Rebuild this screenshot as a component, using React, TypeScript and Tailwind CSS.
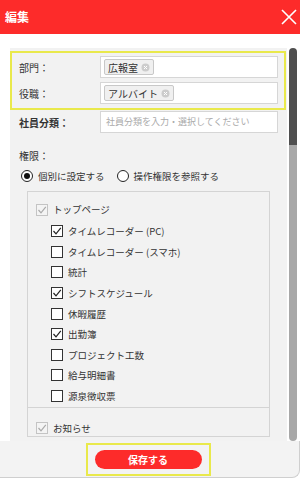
import React from 'react'

const font = { fontFamily: '"Noto Sans CJK JP", "Noto Sans", sans-serif' }

function Check({ checked, disabled }: { checked?: boolean; disabled?: boolean }) {
  return (
    <span
      className={`w-[12px] h-[12px] border flex items-center justify-center shrink-0 ${
        disabled ? 'border-[#c4c4c4] bg-[#f4f4f4]' : 'border-[#333] bg-white'
      }`}
    >
      {checked && (
        <svg width="10" height="10" viewBox="0 0 10 10">
          <path
            d="M1.5 5 L4 7.8 L8.8 1.8"
            fill="none"
            stroke={disabled ? '#aaa' : '#222'}
            strokeWidth="1.2"
          />
        </svg>
      )}
    </span>
  )
}

function Tag({ text }: { text: string }) {
  return (
    <span className="inline-flex items-center gap-[3px] h-[16px] px-[3px] border border-[#c8c8c8] bg-[#f0f0f0] text-[10px] text-[#333] rounded-[2px]">
      {text}
      <svg width="9" height="9" viewBox="0 0 9 9">
        <circle cx="4.5" cy="4.5" r="4" fill="#ccc" />
        <path d="M3 3 L6 6 M6 3 L3 6" stroke="#fff" strokeWidth="1" />
      </svg>
    </span>
  )
}

const items: [string, boolean][] = [
  ['タイムレコーダー (PC)', true],
  ['タイムレコーダー (スマホ)', false],
  ['統計', false],
  ['シフトスケジュール', true],
  ['休暇履歴', false],
  ['出勤簿', true],
  ['プロジェクト工数', false],
  ['給与明細書', false],
  ['源泉徴収票', false],
]

export default function App() {
  return (
    <div className="w-[300px] h-[478px] flex flex-col bg-white overflow-hidden text-[#333]" style={font}>
      {/* header */}
      <div className="h-[34px] shrink-0 bg-[#fd2b2a] flex items-center justify-between pl-[5px] pr-[2px]">
        <span className="text-white font-bold text-[12px]">編集</span>
        <svg width="18" height="18" viewBox="0 0 18 18">
          <path d="M2 2 L16 16 M16 2 L2 16" stroke="#fff" strokeWidth="1.6" />
        </svg>
      </div>

      {/* body */}
      <div className="flex-1 flex pt-[14px] pl-[10px] overflow-hidden">
        <div className="w-[277px] bg-[#f2f2f2] pt-[3px] overflow-hidden">
          <div className="border-[2px] border-[#e9e94b] w-[276px] pt-[3px] pb-[4px] flex flex-col gap-[4px]">
            <div className="flex items-center h-[22px]">
              <span className="w-[88px] pl-[7px] text-[10px]">部門：</span>
              <div className="w-[178px] h-[22px] bg-white border border-[#d6d6d6] flex items-center pl-[3px]">
                <Tag text="広報室" />
              </div>
            </div>
            <div className="flex items-center h-[22px]">
              <span className="w-[88px] pl-[7px] text-[10px]">役職：</span>
              <div className="w-[178px] h-[22px] bg-white border border-[#d6d6d6] flex items-center pl-[3px]">
                <Tag text="アルバイト" />
              </div>
            </div>
          </div>

          <div className="flex items-center h-[22px] mt-[1px]">
            <span className="w-[90px] pl-[9px] text-[10px] font-semibold">社員分類：</span>
            <div className="w-[178px] h-[22px] bg-white border border-[#d6d6d6] flex items-center pl-[5px] text-[9px] text-[#aaa]">
              社員分類を入力・選択してください
            </div>
          </div>

          <div className="pl-[9px] mt-[15px] text-[10px]">権限：</div>
          <div className="flex items-center pl-[11px] mt-[5px] text-[9.5px] h-[16px]">
            <span className="w-[12px] h-[12px] rounded-full border border-[#222] bg-white flex items-center justify-center">
              <span className="w-[6px] h-[6px] rounded-full bg-[#111]" />
            </span>
            <span className="ml-[5px]">個別に設定する</span>
            <span className="w-[12px] h-[12px] rounded-full border border-[#222] bg-white ml-[12px]" />
            <span className="ml-[5px]">操作権限を参照する</span>
          </div>

          <div className="ml-[17px] mt-[7px] w-[243px] border border-[#d4d4d4]">
            <div className="pt-[11px] pl-[8px] flex items-center gap-[5px] text-[9.5px] h-[24px]">
              <Check checked disabled />
              <span>トップページ</span>
            </div>
            <div className="flex flex-col pl-[23px] pt-[5px]">
              {items.map(([label, checked]) => (
                <div key={label} className="flex items-center gap-[5px] h-[20.6px] text-[9.5px]">
                  <Check checked={checked} />
                  <span>{label}</span>
                </div>
              ))}
            </div>
            <div className="border-t border-[#d4d4d4] mt-[1px] pt-[13px] pl-[8px] flex items-center gap-[5px] text-[9.5px]">
              <Check checked disabled />
              <span>お知らせ</span>
            </div>
          </div>
        </div>

        {/* scrollbar */}
        <div className="ml-[2px] w-[8px] flex flex-col">
          <div className="h-[97px] bg-[#4f4f4f] rounded-t-[4px]" />
          <div className="flex-1 bg-[#a8a8a8] rounded-b-[4px]" />
        </div>
      </div>

      {/* footer */}
      <div className="h-[37px] shrink-0 bg-[#f3f3f3] border-r border-b border-[#cfcfcf] rounded-br-[8px] flex items-start justify-center pt-[2px]">
        <div className="border-[2px] border-[#e9e94b] px-[7px] py-[5px] ml-[-3px]">
          <button className="w-[107px] h-[19px] rounded-full bg-[#fd2b2a] text-white text-[10px] font-bold flex items-center justify-center">
            保存する
          </button>
        </div>
      </div>
    </div>
  )
}
